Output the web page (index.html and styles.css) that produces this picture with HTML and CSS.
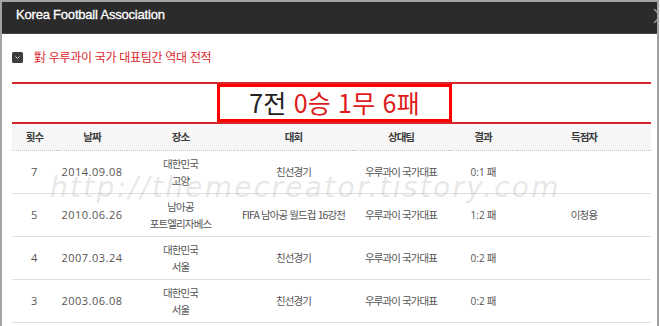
FILE: index.html
```html
<!DOCTYPE html>
<html lang="ko">
<head>
<meta charset="utf-8">
<title>Korea Football Association</title>
<link rel="stylesheet" href="styles.css">
</head>
<body>
<div class="frame">
  <header class="topbar">
    <h1 class="topbar-title">Korea Football Association</h1>
    <svg class="close" width="16" height="16" viewBox="0 0 16 16" aria-hidden="true"><path d="M1 1 L15 15 M15 1 L1 15" stroke="#8c8c8c" stroke-width="1.6" fill="none"/></svg>
  </header>
  <main class="content">
    <h2 class="section-title">
      <span class="toggle"><svg width="11" height="11" viewBox="0 0 11 11" aria-hidden="true"><rect x="0" y="0" width="11" height="11" rx="1.5" fill="#3e3e3e"/><path d="M3.5 4.5 L5.5 6.5 L7.5 4.5" stroke="#d0d0d0" stroke-width="1" fill="none"/></svg></span>
      對 우루과이 국가 대표팀간 역대 전적
    </h2>
    <div class="summary">
      <div class="summary-box">7전 <span class="summary-red">0승 1무 6패</span></div>
    </div>
    <table class="records">
      <colgroup>
        <col class="c-no"><col class="c-date"><col class="c-place"><col class="c-comp"><col class="c-opp"><col class="c-res"><col class="c-scorer">
      </colgroup>
      <thead>
        <tr><th>횟수</th><th>날짜</th><th>장소</th><th>대회</th><th>상대팀</th><th>결과</th><th>득점자</th></tr>
      </thead>
      <tbody>
        <tr><td class="num">7</td><td class="num">2014.09.08</td><td>대한민국<br>고양</td><td>친선경기</td><td>우루과이 국가대표</td><td><span class="score">0:1</span> 패</td><td></td></tr>
        <tr><td class="num">5</td><td class="num">2010.06.26</td><td>남아공<br>포트엘리자베스</td><td class="nowrap">FIFA 남아공 월드컵 16강전</td><td>우루과이 국가대표</td><td><span class="score">1:2</span> 패</td><td>이청용</td></tr>
        <tr><td class="num">4</td><td class="num">2007.03.24</td><td>대한민국<br>서울</td><td>친선경기</td><td>우루과이 국가대표</td><td><span class="score">0:2</span> 패</td><td></td></tr>
        <tr><td class="num">3</td><td class="num">2003.06.08</td><td>대한민국<br>서울</td><td>친선경기</td><td>우루과이 국가대표</td><td><span class="score">0:2</span> 패</td><td></td></tr>
      </tbody>
    </table>
  </main>
  <div class="watermark">http://themecreator.tistory.com</div>
</div>
</body>
</html>
```
FILE: styles.css
```css
* { box-sizing: border-box; }
html, body { margin: 0; height: 100%; overflow: hidden; background: #fff; }
body { font-family: "Noto Sans CJK KR", "Noto Sans", sans-serif; }

.frame {
  position: relative;
  width: 659px;
  height: 340px;
  border: 2px solid #a3a3a3;
  border-bottom: none;
}

.topbar {
  position: relative;
  height: 32px;
  background: #2b2b2b;
  border-bottom: 1px solid #464646;
  overflow: hidden;
  padding: 4px 0 0 14px;
}
.topbar-title {
  margin: 0;
  font: 13px/18px "Liberation Sans", Arial, sans-serif;
  color: #fff;
  letter-spacing: -0.2px;
  -webkit-text-stroke: 0.3px #fff;
}
.close {
  position: absolute;
  top: 6px;
  right: -12px;
}

.content {
  padding: 0 6px 0 10px;
}

.section-title {
  margin: 14px 0 0;
  display: flex;
  align-items: center;
  gap: 11px;
  font-size: 12px;
  line-height: 18px;
  font-weight: 400;
  color: #d9272e;
  letter-spacing: -0.3px;
}
.toggle { display: flex; }

.summary {
  margin-top: 16px;
  border-top: 2px solid #d8262d;
  border-bottom: 2px solid #d8262d;
  display: flex;
  justify-content: center;
  padding-left: 6px;
}
.summary-box {
  width: 235px;
  height: 38px;
  border: 3px solid #ff0000;
  text-align: center;
  font-size: 25px;
  line-height: 31px;
  font-weight: 400;
  color: #222;
  letter-spacing: 0.2px;
}
.summary-red { color: #e01b1b; }

.records {
  width: 100%;
  border-collapse: collapse;
  table-layout: fixed;
}
.c-no { width: 45px; }
.c-date { width: 70px; }
.c-place { width: 107px; }
.c-comp { width: 119px; }
.c-opp { width: 96px; }
.c-res { width: 68px; }
.c-scorer { width: 134px; }

.records th {
  height: 26px;
  padding: 0;
  background: #f6f6f6;
  border-bottom: 1px dotted #c4c4c4;
  font-size: 10.5px;
  font-weight: 700;
  color: #3a3a3a;
  letter-spacing: -1px;
  vertical-align: middle;
}
.records td {
  padding: 4px 0;
  line-height: 17px;
  border-bottom: 1px solid #e0e0e0;
  text-align: center;
  vertical-align: middle;
  font-size: 10.5px;
  color: #555;
  letter-spacing: -0.9px;
}
.records td.num {
  font-family: "Open Sans", "Noto Sans", sans-serif;
  font-size: 11px;
  letter-spacing: 0.5px;
}
.records td.nowrap { white-space: nowrap; }
.score {
  font-family: "Open Sans", "Noto Sans", sans-serif;
  font-size: 10px;
  letter-spacing: 0;
}

.watermark {
  position: absolute;
  left: 48px;
  top: 172px;
  font-family: "DejaVu Sans", sans-serif;
  font-style: italic;
  font-weight: 200;
  font-size: 28px;
  line-height: 1;
  letter-spacing: 2.3px;
  color: rgba(160, 160, 160, 0.25);
  white-space: nowrap;
  pointer-events: none;
}
```
